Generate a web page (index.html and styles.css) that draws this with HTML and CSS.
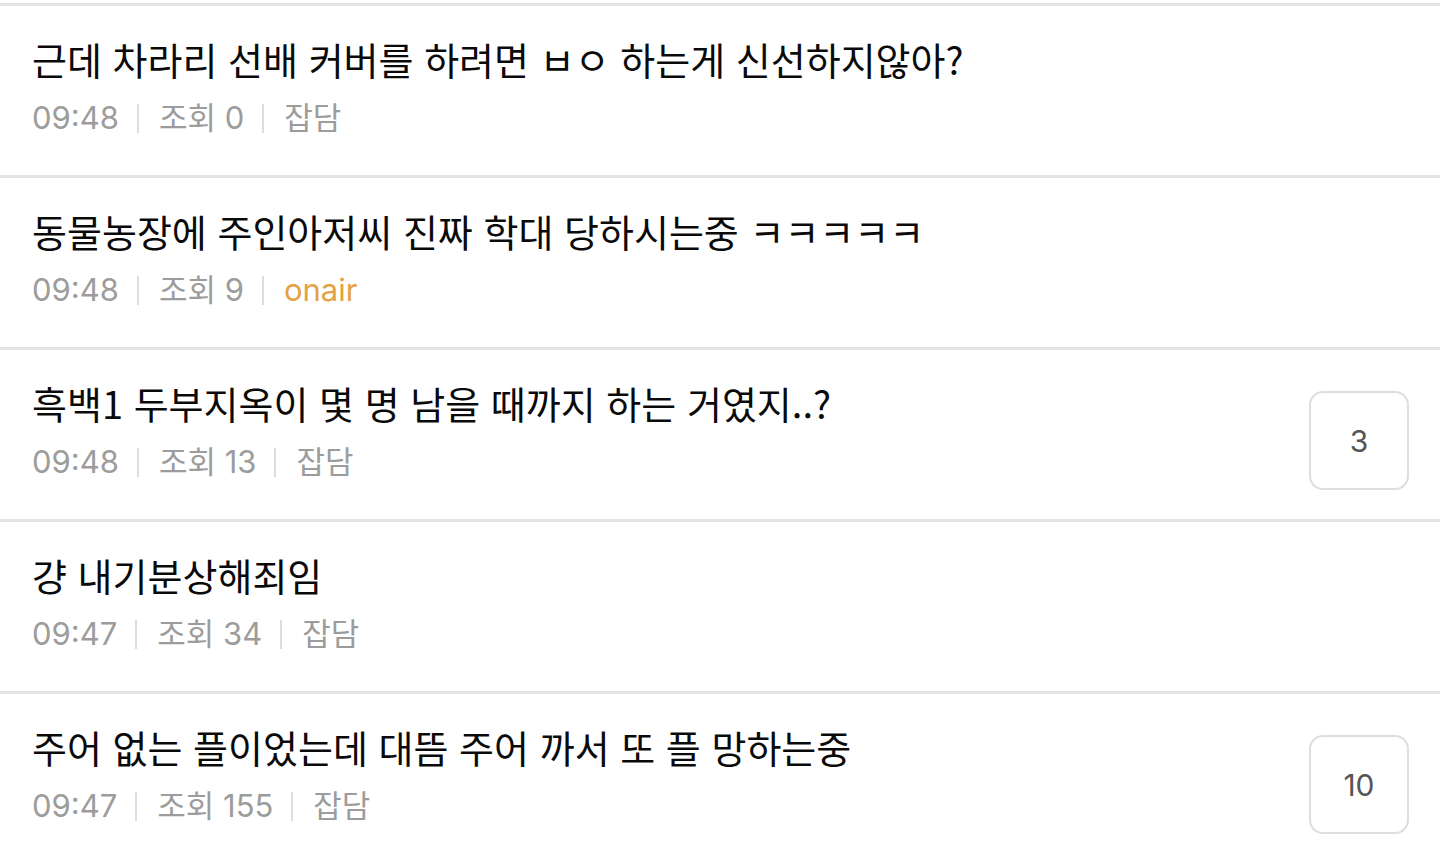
FILE: index.html
```html
<!DOCTYPE html>
<html lang="ko">
<head>
<meta charset="utf-8">
<link rel="stylesheet" href="styles.css">
</head>
<body>
<ul class="list">
  <li class="item">
    <div class="text">
      <div class="title">근데 차라리 선배 커버를 하려면 ㅂㅇ 하는게 신선하지않아?</div>
      <div class="meta"><span>09:48</span><i class="sep"></i><span>조회 0</span><i class="sep"></i><span>잡담</span></div>
    </div>
  </li>
  <li class="item">
    <div class="text">
      <div class="title">동물농장에 주인아저씨 진짜 학대 당하시는중 ㅋㅋㅋㅋㅋ</div>
      <div class="meta"><span>09:48</span><i class="sep"></i><span>조회 9</span><i class="sep"></i><span class="onair">onair</span></div>
    </div>
  </li>
  <li class="item">
    <div class="text">
      <div class="title">흑백1 두부지옥이 몇 명 남을 때까지 하는 거였지..?</div>
      <div class="meta"><span>09:48</span><i class="sep"></i><span>조회 13</span><i class="sep"></i><span>잡담</span></div>
    </div>
    <div class="count">3</div>
  </li>
  <li class="item">
    <div class="text">
      <div class="title">걍 내기분상해죄임</div>
      <div class="meta"><span>09:47</span><i class="sep"></i><span>조회 34</span><i class="sep"></i><span>잡담</span></div>
    </div>
  </li>
  <li class="item">
    <div class="text">
      <div class="title">주어 없는 플이었는데 대뜸 주어 까서 또 플 망하는중</div>
      <div class="meta"><span>09:47</span><i class="sep"></i><span>조회 155</span><i class="sep"></i><span>잡담</span></div>
    </div>
    <div class="count">10</div>
  </li>
</ul>
</body>
</html>
```
FILE: styles.css
```css
html, body {
  margin: 0;
  padding: 0;
  background: #fff;
  overflow: hidden;
}
body {
  font-family: "Inter", "Noto Sans CJK KR", sans-serif;
  color: #111;
}
.list {
  list-style: none;
  margin: 3px 0 0;
  padding: 0;
  border-top: 3px solid #e4e4e4;
}
.item {
  display: flex;
  align-items: center;
  height: 169px;
  padding: 0 31px 0 32px;
  border-bottom: 3px solid #e4e4e4;
}
.text {
  flex: 1;
  min-width: 0;
  padding-bottom: 8px;
}
.title {
  font-family: "Noto Sans CJK KR", sans-serif;
  font-size: 38px;
  line-height: 48px;
  color: #0a0a0a;
  white-space: nowrap;
}
.meta {
  display: flex;
  align-items: center;
  margin-top: 15px;
  font-size: 31px;
  line-height: 40px;
  color: #9c9c9c;
}
.sep {
  display: block;
  width: 2px;
  height: 29px;
  background: #dddddd;
  margin: 0 20px 0 18px;
}
.onair {
  color: #e3a243;
}
.count {
  display: flex;
  align-items: center;
  justify-content: center;
  width: 96px;
  height: 95px;
  margin-top: 12px;
  border: 2px solid #dedede;
  border-radius: 14px;
  font-size: 30px;
  color: #555;
}
```
